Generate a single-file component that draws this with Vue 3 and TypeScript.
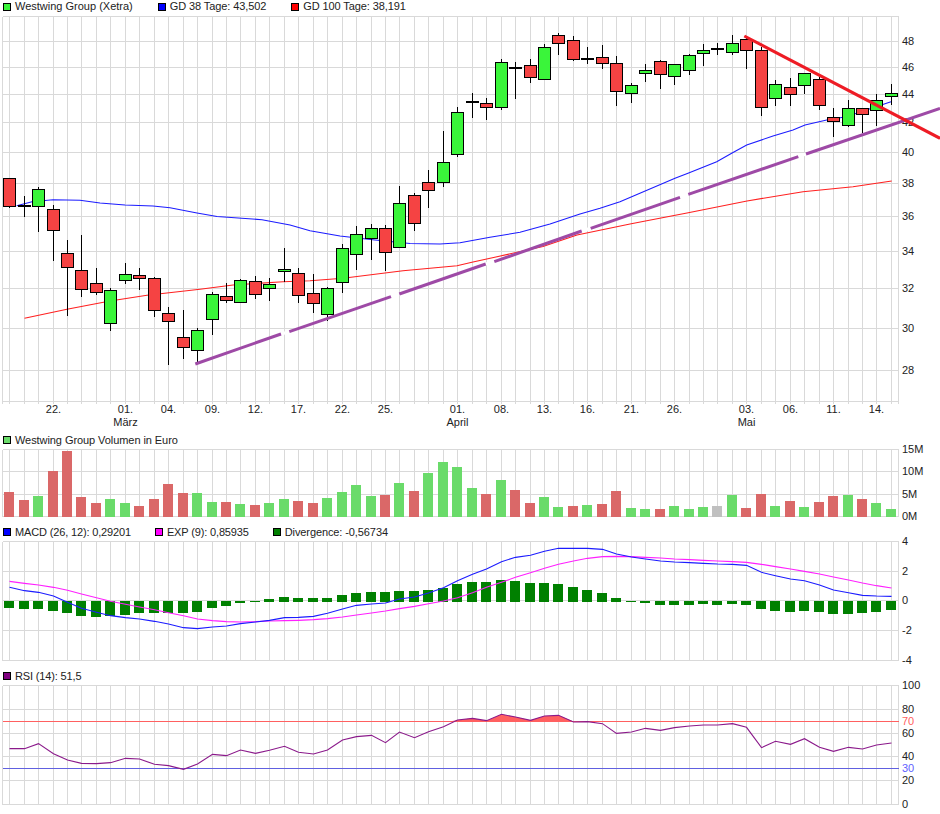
<script setup lang="ts">
type Candle = [number, number, number, number, 'r' | 'g']
type Pt = [number, number]

const COLS = 62
const gx = (i: number): number => Math.round(9.15 + 14.455 * i) + 0.5
const columns = Array.from({ length: COLS }, (_, i) => gx(i))

function gridPath(top: number, bottom: number, ys: number[], tick = 0): string {
  const v = [2.5, ...columns, 898.5].map((x) => `M${x} ${top}V${bottom + tick}`)
  const h = [top, ...ys, bottom].map((y) => `M2.5 ${y}H898.5`)
  return [...v, ...h].join('')
}

const poly = (pts: Pt[]): string => pts.map((p) => p.join(',')).join(' ')

// wick top, wick bottom, body top, body bottom, colour
const candleData: Candle[] = [
  [178, 207.5, 178.3, 206.7, 'r'], [196, 217, 205, 206.7, 'g'], [186.7, 231.7, 189.3, 206.7, 'g'],
  [205, 260.7, 209.3, 230.7, 'r'], [240, 316, 253.3, 268.3, 'r'], [235, 296.7, 270.3, 290.3, 'r'],
  [268, 294.7, 283.3, 293.3, 'r'], [288, 330.7, 290.3, 324.3, 'g'], [263, 284.3, 274.3, 281.3, 'g'],
  [268.3, 289.7, 275.3, 279.3, 'r'], [277.3, 316.7, 278.3, 311.3, 'r'], [307.3, 364.7, 313.3, 322.3, 'r'],
  [310, 358.7, 337.3, 348.3, 'r'], [328.3, 363.3, 330.3, 351.3, 'g'], [292.3, 335, 294.3, 320.3, 'g'],
  [283.3, 303.3, 296.3, 301.3, 'r'], [279.3, 303.3, 280.3, 303.3, 'g'], [276, 298.7, 281.3, 295.3, 'r'],
  [278.3, 300.7, 284.3, 289.3, 'g'], [248.3, 282.3, 269.3, 272.3, 'g'], [268, 302.7, 273.3, 296.3, 'r'],
  [274, 312.7, 293.3, 304.3, 'r'], [286.7, 320.7, 288.3, 315.3, 'g'], [244, 292.7, 248.3, 283.3, 'g'],
  [226, 270, 234.3, 255.3, 'g'], [224, 260, 228.3, 239.3, 'g'], [225, 271, 228.3, 253.3, 'r'],
  [186, 248.3, 203.3, 248.3, 'g'], [193.3, 230.7, 195.3, 224.3, 'r'], [170, 207.7, 182.3, 191.3, 'r'],
  [131, 186.7, 162.3, 183.3, 'g'], [107, 157.3, 112.3, 155.3, 'g'], [93.3, 117.7, 101, 102.6, 'g'],
  [98.3, 119.7, 103.3, 108.3, 'r'], [59.3, 109.7, 62.3, 108.3, 'g'], [62, 99, 67, 68.6, 'g'],
  [59.3, 82.7, 65.3, 78.3, 'r'], [44.3, 80.3, 47.3, 80.3, 'g'], [33.3, 55, 35.3, 44.3, 'r'],
  [36, 61.3, 40.3, 60.3, 'r'], [47, 64, 58.3, 60.3, 'g'], [45, 69, 57.3, 64.3, 'r'],
  [56, 105.7, 63.3, 92.3, 'r'], [83.3, 102.7, 85.3, 94.3, 'g'], [64, 81.7, 70.3, 74.3, 'g'],
  [60.3, 88.7, 61.3, 75.3, 'r'], [64.3, 84.7, 64.3, 77.3, 'g'], [54.3, 74.7, 55.3, 71.3, 'g'],
  [44, 65.7, 50.3, 54.3, 'g'], [43, 55, 48.3, 50.3, 'r'], [35, 55.3, 43.3, 53.3, 'g'],
  [36, 68.7, 39.3, 51.3, 'r'], [46.7, 115.7, 50.3, 108.3, 'r'], [80, 105.7, 84.3, 99.3, 'g'],
  [78.3, 105.7, 87.3, 95.3, 'r'], [73.3, 94.3, 73.3, 86.3, 'g'], [76.7, 109.7, 79.3, 106.3, 'r'],
  [108.3, 136.7, 117.3, 122.3, 'r'], [100, 127.3, 108.3, 126.3, 'g'], [107.7, 133.3, 108.3, 115.3, 'r'],
  [94.3, 126, 100.3, 111.3, 'g'], [84.3, 104.7, 93.3, 97.3, 'g'],
]

const candles = candleData.map(([wt, wb, bt, bb, c], i) => ({
  x: gx(i),
  wt,
  wb,
  bt: Math.round(bt) + 0.5,
  bh: Math.max(Math.round(bb) - Math.round(bt) - 1, 1),
  c,
}))

const ma38: Pt[] = [
  [16.7, 205.7], [32, 201.7], [53, 199.7], [80, 200.3], [100, 203], [125, 205], [153, 206], [170, 207.7],
  [197, 213], [217, 216.5], [262, 219.7], [290, 225], [310, 230.7], [340, 236], [375, 240], [410, 243.5],
  [440, 244], [460, 242.7], [490, 237.3], [520, 232.3], [550, 224], [580, 214], [600, 208.3], [620, 201.7],
  [675, 178.3], [688, 173.3], [716.7, 161.7], [733, 152.5], [746.7, 145], [773, 136], [793, 130], [805, 125],
  [826.7, 120], [846, 116.7], [870, 108.7], [891, 101.7],
]
const ma100: Pt[] = [
  [24.5, 318.3], [67, 309.3], [110, 301], [147, 295.3], [200, 289.3], [233, 285], [283, 281.7], [310, 280.7],
  [343, 278.3], [403, 270.7], [457, 265.7], [473, 262], [497, 256.7], [543, 246.5], [577, 235], [630, 224],
  [648, 220.5], [687, 213], [747, 201], [803, 191.7], [853, 186.7], [891.7, 181],
]
const purple: [number, number, number, number][] = [
  [195.3, 364, 281, 334], [289.3, 331.7, 391, 296.7], [399.3, 294, 485.7, 264],
  [494.3, 261.7, 581.7, 231], [590.7, 228.3, 680, 197.3], [688.3, 194.3, 798.3, 156.7], [806, 154, 940, 108.3],
]
const gaps = purple.slice(0, -1).map((s, i) => [s[2], s[3], purple[i + 1][0], purple[i + 1][1]])

const priceLabels: [string, number][] = [
  ['48', 41.5], ['46', 67.5], ['44', 94.5], ['42', 122.5], ['40', 152.5], ['38', 183.5],
  ['36', 216.5], ['34', 251.5], ['32', 288.5], ['30', 328.5], ['28', 370.5],
]
const dayLabels: [string, number][] = [
  ['22.', 3], ['01.', 8], ['04.', 11], ['09.', 14], ['12.', 17], ['17.', 20], ['22.', 23], ['25.', 26], ['01.', 31],
  ['08.', 34], ['13.', 37], ['16.', 40], ['21.', 43], ['26.', 46], ['03.', 51], ['06.', 54], ['11.', 57], ['14.', 60],
]
const monthLabels: [string, number][] = [['März', 8], ['April', 31], ['Mai', 51]]

const volTops = [
  186, 210, 198, 123, 63, 201, 219, 207, 219, 228, 207, 162, 189, 189, 216, 216, 222, 225, 219, 207, 213,
  219, 204, 186, 165, 198, 195, 159, 183, 129, 96, 111, 174, 192, 150, 180, 219, 201, 231, 228, 225, 222,
  183, 234, 237, 237, 228, 237, 231, 228, 195, 234, 192, 228, 213, 231, 216, 198, 195, 207, 219, 237,
]
const volFlags = 'rrgrrrrggr' + 'rrrggrgrgg' + 'rrggggrgrg' + 'gggrgrrggr' + 'grrggrgggx' + 'grrgrgrrgrgg'
const volumes = volTops.map((t, i) => ({
  x: gx(i) - 5.5,
  y: 430 + t / 3,
  h: 516.7 - (430 + t / 3),
  c: volFlags[i],
}))

const volLabels: [string, number][] = [['15M', 449.5], ['10M', 471.5], ['5M', 494.5], ['0M', 516.5]]

const divergence = [
  249, 252, 252, 258, 264, 273, 276, 273, 270, 264, 264, 264, 264, 261, 249, 243, 234, 231,
  222, 216, 219, 219, 219, 210, 204, 201, 201, 198, 198, 195, 189, 177, 171, 171, 165, 168, 174, 174, 177, 186, 195, 204, 219,
  231, 234, 240, 240, 240, 237, 240, 237, 240, 252, 258, 261, 258, 261, 267, 267, 264, 261, 255,
]
const divBars = divergence.map((v, i) => {
  const y = 525 + v / 3
  const pos = v < 228
  return {
    x: gx(i) - 5.5,
    y: pos ? y : 601,
    h: pos ? 602 - y : y - 601,
  }
})

const macdVals = [
  187, 197, 202, 213, 232, 250, 262, 272, 278, 282, 289, 297, 308, 311, 306, 303, 296, 291, 286, 278, 277, 274,
  265, 252, 241, 237, 234, 222, 216, 204, 188, 167, 148, 132, 110, 97, 91, 79, 70, 70, 70, 73, 87, 96, 102, 108,
  111, 113, 115, 117, 118, 121, 142, 152, 162, 167, 180, 195, 203, 211, 213, 214,
]
const expVals = [
  169, 175, 180, 187, 196, 207, 218, 229, 238, 246, 254, 263, 272, 282, 287, 290, 291, 290, 288, 287, 286, 284,
  281, 276, 270, 264, 258, 251, 244, 236, 228, 218, 203, 187, 172, 157, 143, 130, 118, 108, 100, 95, 94, 95, 97,
  99, 102, 104, 106, 108, 110, 112, 118, 125, 132, 139, 147, 156, 165, 174, 182, 189,
]
const macdPts = macdVals.map((v, i): Pt => [gx(i), 525 + v / 3])
const expPts = expVals.map((v, i): Pt => [gx(i), 525 + v / 3])
const macdLabels: [string, number][] = [['4', 541.5], ['2', 571.5], ['0', 600.5], ['-2', 630.5], ['-4', 660.5]]

const rsiVals = [
  251, 251, 236, 266, 285, 295, 296, 293, 280, 282, 298, 302, 313, 297, 268, 272, 255, 265, 256, 244, 262, 267,
  255, 225, 215, 211, 233, 201, 218, 200, 185, 165, 160, 167, 148, 156, 166, 153, 151, 171, 170, 176, 205, 201,
  190, 196, 188, 183, 180, 180, 176, 187, 248, 229, 238, 221, 247, 259, 247, 252, 240, 234,
]
const rsiPts = rsiVals.map((v, i): Pt => [gx(i), 665 + v / 3])
const rsi70 = 721.5
const rsiFill: Pt[] = [[gx(30) + 6, rsi70], ...rsiPts.slice(31, 39), [gx(39), rsi70]]
const rsiLabels: [string, number, string][] = [
  ['100', 685.5, ''], ['80', 709.5, ''], ['70', 721.5, 'hot'], ['60', 733.5, ''],
  ['40', 756.5, ''], ['30', 768.5, 'cold'], ['20', 780.5, ''], ['0', 804.5, ''],
]

const mainGrid = gridPath(16.5, 401.5, priceLabels.map((p) => p[1]), 2)
const volGrid = gridPath(449.5, 516.5, [471.5, 494.5])
const macdGrid = gridPath(541.5, 660.5, [571.5, 600.5, 630.5])
const rsiGrid = gridPath(685.5, 804.5, [709.5, 733.5, 756.5, 780.5])
</script>

<template>
  <div class="chart">
    <section>
      <div class="legend legend-main">
        <span class="item"><i class="swatch price-up"></i>Westwing Group (Xetra)</span>
        <span class="item tight"><i class="swatch blue"></i>GD 38 Tage: 43,502</span>
        <span class="item tight"><i class="swatch red"></i>GD 100 Tage: 38,191</span>
      </div>
      <svg class="plot" width="940" height="420" viewBox="0 12 940 420">
        <path class="grid" :d="mainGrid" />
        <text v-for="l in priceLabels" :key="l[0]" class="axis" x="902" :y="l[1] + 3">{{ l[0] }}</text>
        <text v-for="l in dayLabels" :key="l[0] + l[1]" class="axis mid" :x="gx(l[1])" y="413">{{ l[0] }}</text>
        <text v-for="l in monthLabels" :key="l[0]" class="axis mid" :x="gx(l[1])" y="426">{{ l[0] }}</text>
        <polyline class="line" stroke="#1c1cff" :points="poly(ma38)" />
        <polyline class="line" stroke="#ff2020" :points="poly(ma100)" />
        <g v-for="(c, i) in candles" :key="i">
          <line class="wick" :x1="c.x" :x2="c.x" :y1="c.wt" :y2="c.wb" />
          <rect class="body" :class="c.c" :x="c.x - 6" :y="c.bt" width="12" :height="c.bh" />
        </g>
        <line v-for="(g, i) in gaps" :key="'g' + i" class="gap" :x1="g[0]" :y1="g[1]" :x2="g[2]" :y2="g[3]" />
        <line v-for="(s, i) in purple" :key="'p' + i" class="trend-purple" :x1="s[0]" :y1="s[1]" :x2="s[2]" :y2="s[3]" />
        <line class="trend-red" x1="744.3" y1="36" x2="940" y2="138.3" />
      </svg>
    </section>

    <section>
      <div class="legend">
        <span class="item slight"><i class="swatch vol"></i>Westwing Group Volumen in Euro</span>
      </div>
      <svg class="plot" width="940" height="77" viewBox="0 447 940 77">
        <path class="grid" :d="volGrid" />
        <rect v-for="(v, i) in volumes" :key="i" class="vbar" :class="'v' + v.c" :x="v.x" :y="v.y" width="10" :height="v.h" />
        <text v-for="l in volLabels" :key="l[0]" class="axis" x="902" :y="l[1] + 3">{{ l[0] }}</text>
      </svg>
    </section>

    <section>
      <div class="legend">
        <span class="item tighter"><i class="swatch blue"></i>MACD (26, 12): 0,29201</span>
        <span class="item tighter"><i class="swatch magenta"></i>EXP (9): 0,85935</span>
        <span class="item tight"><i class="swatch dgreen"></i>Divergence: -0,56734</span>
      </div>
      <svg class="plot" width="940" height="129" viewBox="0 539 940 129">
        <path class="grid" :d="macdGrid" />
        <rect v-for="(b, i) in divBars" :key="i" class="dbar" :x="b.x" :y="b.y" width="10" :height="b.h" />
        <polyline class="line" stroke="#ff20ff" :points="poly(expPts)" />
        <polyline class="line" stroke="#1c1cff" :points="poly(macdPts)" />
        <text v-for="l in macdLabels" :key="l[0]" class="axis" x="902" :y="l[1] + 3">{{ l[0] }}</text>
      </svg>
    </section>

    <section>
      <div class="legend">
        <span class="item tighter"><i class="swatch purple"></i>RSI (14): 51,5</span>
      </div>
      <svg class="plot" width="940" height="131" viewBox="0 683 940 131">
        <path class="grid" :d="rsiGrid" />
        <polygon class="rsi-fill" :points="poly(rsiFill)" />
        <line class="limit-hot" x1="2.5" x2="898.5" y1="721.5" y2="721.5" />
        <line class="limit-cold" x1="2.5" x2="898.5" y1="768.5" y2="768.5" />
        <polyline class="line" stroke="#8b1a8b" :points="poly(rsiPts)" />
        <text v-for="l in rsiLabels" :key="l[0]" class="axis" :class="l[2]" x="902" :y="l[1] + 3">{{ l[0] }}</text>
      </svg>
    </section>
  </div>
</template>

<style scoped>
.chart {
  width: 940px;
  height: 814px;
  overflow: hidden;
  background: #fff;
  font-family: "Liberation Sans", Arial, sans-serif;
  font-size: 11px;
  color: #222;
}
.legend {
  position: relative;
  z-index: 1;
  display: flex;
  align-items: center;
  gap: 24px;
  height: 15px;
  padding-left: 3px;
}
.legend-main {
  gap: 25px;
  height: 12px;
}
.item {
  display: flex;
  align-items: center;
  white-space: nowrap;
}
.slight { letter-spacing: -0.07px; }
.tight { letter-spacing: -0.1px; }
.tighter { letter-spacing: -0.15px; }
.swatch {
  display: block;
  box-sizing: border-box;
  width: 8px;
  height: 8px;
  margin-top: 1px;
  margin-right: 4px;
  border: 1px solid #000;
}
.price-up { background: #3af53a; }
.blue { background: #0000ff; }
.red { background: #ff0000; }
.vol { background: #6adb6a; }
.magenta { background: #ff00ff; }
.dgreen { background: #008000; }
.purple { background: #800080; }
.plot {
  display: block;
  overflow: visible;
}
.grid {
  fill: none;
  stroke: #d9d9d9;
  stroke-width: 1;
  shape-rendering: crispEdges;
}
.axis {
  font-family: "Liberation Sans", Arial, sans-serif;
  font-size: 11px;
  fill: #222;
}
.mid { text-anchor: middle; }
.hot { fill: #ff6060; }
.cold { fill: #6060ff; }
.line {
  fill: none;
  stroke-width: 1.1;
}
.wick {
  stroke: #000;
  stroke-width: 1;
  shape-rendering: crispEdges;
}
.body {
  stroke: #000;
  stroke-width: 1;
  shape-rendering: crispEdges;
}
.r { fill: #f54343; }
.g { fill: #3af53a; }
.gap {
  stroke: #fff;
  stroke-width: 3;
}
.trend-purple {
  stroke: #9e4aa6;
  stroke-width: 3;
}
.trend-red {
  stroke: #ee1c25;
  stroke-width: 3;
}
.vbar { shape-rendering: crispEdges; }
.vg { fill: #6adb6a; }
.vr { fill: #da6868; }
.vx { fill: #c0c0c0; }
.dbar {
  fill: #008000;
  shape-rendering: crispEdges;
}
.rsi-fill { fill: #ff6060; }
.limit-hot {
  stroke: #ff6060;
  shape-rendering: crispEdges;
}
.limit-cold {
  stroke: #6060e0;
  shape-rendering: crispEdges;
}
</style>
